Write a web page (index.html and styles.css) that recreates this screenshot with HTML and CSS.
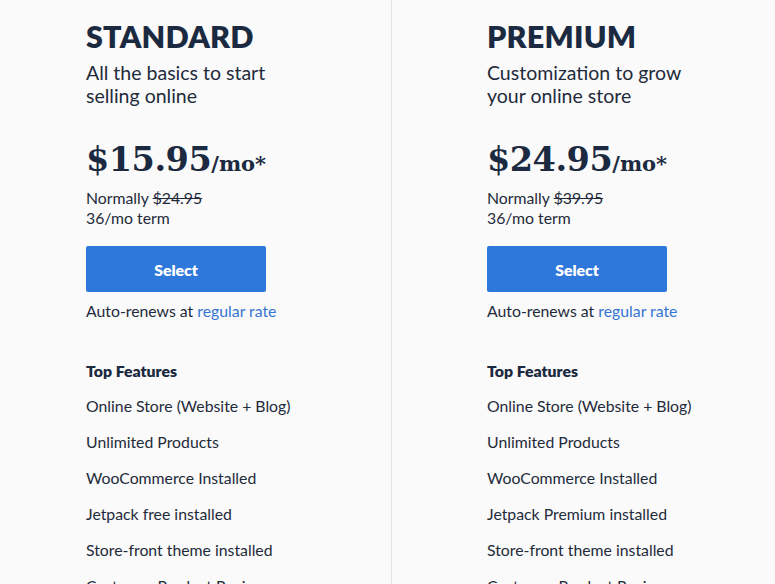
FILE: index.html
```html
<!DOCTYPE html>
<html lang="en">
<head>
<meta charset="utf-8">
<title>Plans</title>
<link rel="stylesheet" href="styles.css">
</head>
<body>
<div class="plans">
  <section class="plan plan-standard">
    <h2 class="plan-name">STANDARD</h2>
    <p class="plan-desc">All the basics to start<br>selling online</p>
    <div class="price"><span class="amount">$15.95</span><span class="per">/mo*</span></div>
    <p class="normally">Normally <s>$24.95</s><br>36/mo term</p>
    <button class="select-btn" type="button">Select</button>
    <p class="renew">Auto-renews at <a href="#">regular rate</a></p>
    <h3 class="features-title">Top Features</h3>
    <ul class="features">
      <li>Online Store (Website + Blog)</li>
      <li>Unlimited Products</li>
      <li>WooCommerce Installed</li>
      <li>Jetpack free installed</li>
      <li>Store-front theme installed</li>
      <li>Customer Product Reviews</li>
    </ul>
  </section>
  <section class="plan plan-premium">
    <h2 class="plan-name">PREMIUM</h2>
    <p class="plan-desc">Customization to grow<br>your online store</p>
    <div class="price"><span class="amount">$24.95</span><span class="per">/mo*</span></div>
    <p class="normally">Normally <s>$39.95</s><br>36/mo term</p>
    <button class="select-btn" type="button">Select</button>
    <p class="renew">Auto-renews at <a href="#">regular rate</a></p>
    <h3 class="features-title">Top Features</h3>
    <ul class="features">
      <li>Online Store (Website + Blog)</li>
      <li>Unlimited Products</li>
      <li>WooCommerce Installed</li>
      <li>Jetpack Premium installed</li>
      <li>Store-front theme installed</li>
      <li>Customer Product Reviews</li>
    </ul>
  </section>
</div>
</body>
</html>
```

FILE: styles.css
```css
html, body {
  margin: 0;
  padding: 0;
  background: #fafafa;
  overflow: hidden;
}
body {
  font-family: "Lato", "Open Sans", sans-serif;
  color: #1f2b3b;
  width: 775px;
  height: 584px;
}
.plans {
  display: grid;
  grid-template-columns: 391px 1fr;
  height: 584px;
  overflow: hidden;
}
.plan {
  padding-top: 17px;
}
.plan-standard {
  padding-left: 86px;
}
.plan-premium {
  border-left: 1px solid #e3e3e3;
  padding-left: 95px;
}
.plan-name {
  margin: 0;
  font-size: 30.5px;
  line-height: 38px;
  font-weight: 800;
  color: #1b2a40;
  letter-spacing: 0.2px;
}
.plan-desc {
  margin: 6px 0 0;
  font-size: 19.5px;
  line-height: 23px;
  color: #1f2b3b;
}
.price {
  margin-top: 31px;
  font-family: "DejaVu Serif", "Liberation Serif", serif;
  font-weight: bold;
  color: #1b2a40;
  line-height: 44px;
}
.amount {
  font-size: 33.5px;
  letter-spacing: -0.5px;
}
.per {
  font-size: 21px;
}
.normally {
  margin: 0;
  font-size: 15.8px;
  line-height: 20px;
}
.normally s {
  text-decoration-thickness: 1px;
}
.select-btn {
  display: block;
  margin-top: 18px;
  width: 180px;
  height: 46px;
  border: none;
  border-radius: 2px;
  background: #2e77db;
  color: #fff;
  font-family: inherit;
  font-size: 15.8px;
  font-weight: 800;
  cursor: pointer;
}
.renew {
  margin: 9px 0 0;
  font-size: 15.8px;
  line-height: 20px;
}
.renew a {
  color: #3575d3;
  text-decoration: none;
}
.features-title {
  margin: 40px 0 0;
  font-size: 15.8px;
  line-height: 20px;
  font-weight: 800;
  color: #1b2a40;
}
.features {
  list-style: none;
  margin: 0;
  padding: 0;
}
.features li {
  margin-top: 15px;
  font-size: 15.8px;
  line-height: 20px;
}
.features li + li {
  margin-top: 16.1px;
}
```
